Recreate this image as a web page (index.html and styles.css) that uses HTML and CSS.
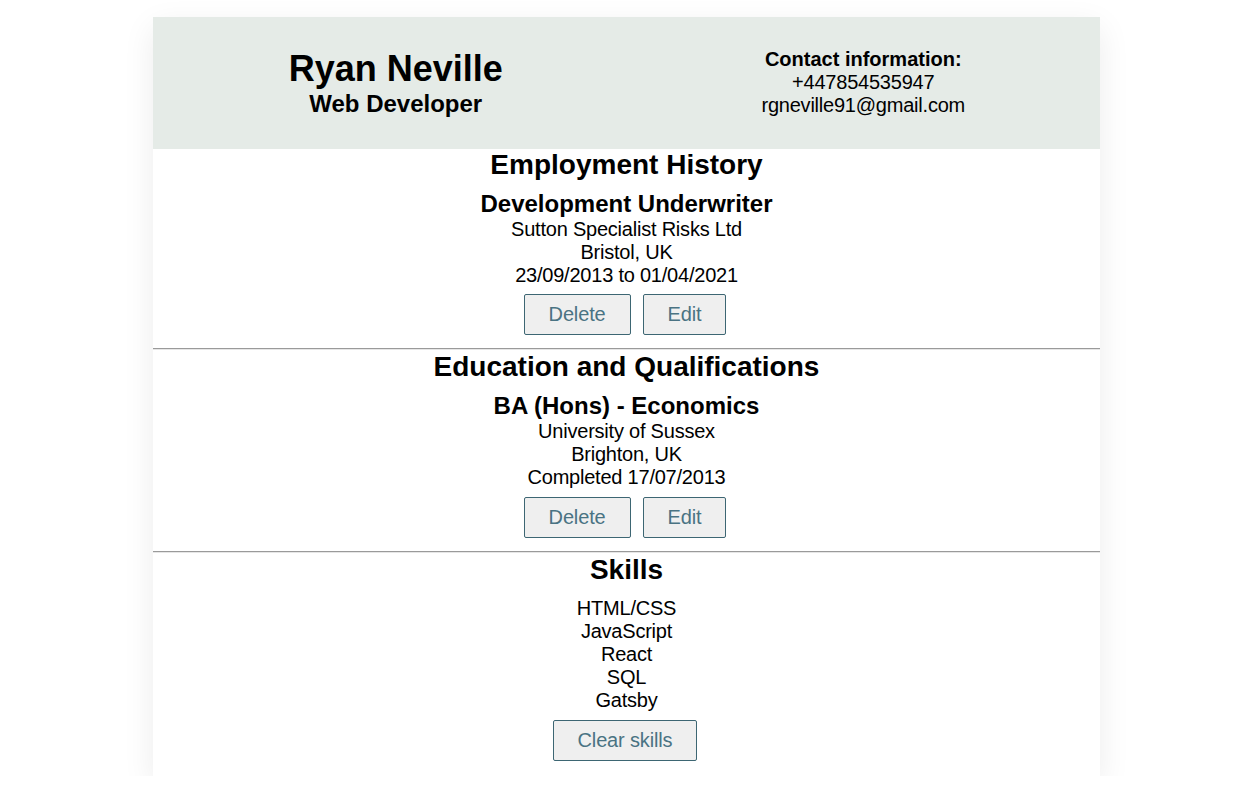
FILE: index.html
```html
<!DOCTYPE html>
<html lang="en">
<head>
<meta charset="utf-8">
<title>Ryan Neville - CV</title>
<link rel="stylesheet" href="styles.css">
</head>
<body>
<div class="cv">
  <header class="cv-header">
    <div class="identity">
      <div class="name">Ryan Neville</div>
      <div class="role">Web Developer</div>
    </div>
    <div class="contact">
      <div class="contact-title">Contact information:</div>
      <div class="text">+447854535947</div>
      <div class="text">rgneville91@gmail.com</div>
    </div>
  </header>

  <section class="section">
    <h2 class="section-title">Employment History</h2>
    <div class="entry">
      <h3 class="entry-title">Development Underwriter</h3>
      <div class="text">Sutton Specialist Risks Ltd</div>
      <div class="text">Bristol, UK</div>
      <div class="text">23/09/2013 to 01/04/2021</div>
      <div class="actions">
        <button class="btn">Delete</button>
        <button class="btn">Edit</button>
      </div>
    </div>
  </section>
  <hr class="divider">

  <section class="section">
    <h2 class="section-title">Education and Qualifications</h2>
    <div class="entry">
      <h3 class="entry-title">BA (Hons) - Economics</h3>
      <div class="text">University of Sussex</div>
      <div class="text">Brighton, UK</div>
      <div class="text">Completed 17/07/2013</div>
      <div class="actions actions-edu">
        <button class="btn">Delete</button>
        <button class="btn">Edit</button>
      </div>
    </div>
  </section>
  <hr class="divider">

  <section class="section skills">
    <h2 class="section-title">Skills</h2>
    <ul class="skill-list">
      <li>HTML/CSS</li>
      <li>JavaScript</li>
      <li>React</li>
      <li>SQL</li>
      <li>Gatsby</li>
    </ul>
    <div class="actions actions-skills">
      <button class="btn">Clear skills</button>
    </div>
  </section>
</div>
</body>
</html>
```

FILE: styles.css
```css
html, body {
  margin: 0;
  background: #ffffff;
}

body {
  font-family: "Liberation Sans", Arial, sans-serif;
  color: #000;
  padding: 17px 134px 0 153px;
}

.cv {
  background: #fff;
  box-shadow: 0 10px 30px rgba(0, 0, 0, 0.08);
  padding-bottom: 15px;
  text-align: center;
  font-size: 20px;
}

.text,
.skill-list li {
  letter-spacing: -0.22px;
}

.cv-header {
  background: #e5ebe7;
  height: 132px;
  display: grid;
  grid-template-columns: 1fr 1fr;
  align-items: center;
}

.identity {
  padding-left: 12px;
}

.contact {
  padding-bottom: 2px;
}

.name {
  font-size: 36px;
  font-weight: bold;
}

.role {
  font-size: 24px;
  font-weight: bold;
}

.contact-title {
  font-weight: bold;
}

.section-title {
  font-size: 28px;
  font-weight: bold;
  margin: 0;
}

.entry-title {
  font-size: 24px;
  font-weight: bold;
  margin: 9px 0 0;
}

.actions {
  display: flex;
  justify-content: center;
  gap: 12px;
  padding-right: 3px;
  margin: 7px 0 13px;
}

.actions-edu {
  margin: 8px 0 13px;
}

.actions-skills {
  margin: 8px 0 0;
}

.btn {
  font-family: "Liberation Sans", Arial, sans-serif;
  font-size: 20px;
  line-height: 23px;
  letter-spacing: -0.15px;
  color: #4a7383;
  background: #efefef;
  border: 1px solid #3d6673;
  border-radius: 2px;
  padding: 8px 24px;
  margin: 0;
}

.divider {
  margin: 0 0 1px;
  border: 0;
  border-top: 1px solid #9a9a9a;
  border-bottom: 1px solid #e6e6e6;
}

.skill-list {
  list-style: none;
  margin: 11px 0 0;
  padding: 0;
}
```
